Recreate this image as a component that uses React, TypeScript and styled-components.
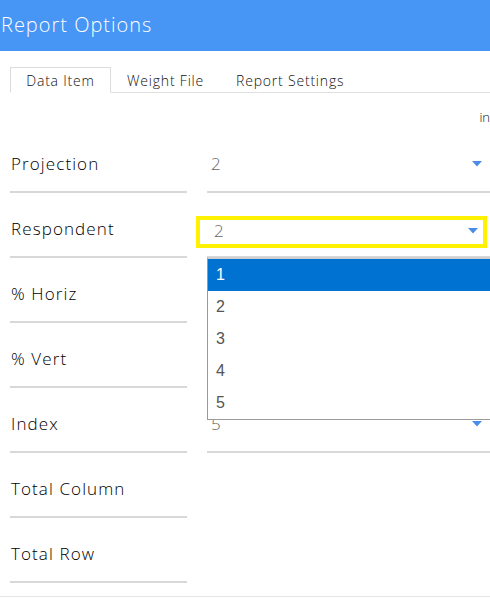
import React from 'react'
import styled, { createGlobalStyle } from 'styled-components'

const Global = createGlobalStyle`
  html, body {
    margin: 0;
    padding: 0;
    background: #fff;
  }
  body {
    font-family: 'Open Sans', 'Noto Sans', sans-serif;
    overflow: hidden;
  }
`

type Field = {
  label: string
  value?: string
  focused?: boolean
}

// % Horiz and % Vert sit under the open list, so they show no select
const fields: Field[] = [
  { label: 'Projection', value: '2' },
  { label: 'Respondent', value: '2', focused: true },
  { label: '% Horiz' },
  { label: '% Vert' },
  { label: 'Index', value: '5' },
  { label: 'Total Column' },
  { label: 'Total Row' },
]

const options = ['1', '2', '3', '4', '5']

function Arrow() {
  return (
    <svg width="10" height="6" viewBox="0 0 10 6">
      <path d="M0 0 L10 0 L5 5.5 Z" fill="#4a8de6" />
    </svg>
  )
}

export default function App() {
  return (
    <Page>
      <Global />
      <Header>Report Options</Header>
      <Tabs>
        <Tab $active>Data Item</Tab>
        <Tab>Weight File</Tab>
        <Tab>Report Settings</Tab>
      </Tabs>
      <Hint>in</Hint>
      <Form>
        {fields.map((f) => (
          <Row key={f.label}>
            <Label>{f.label}</Label>
            {f.value !== undefined && (
              <SelectCell>
                <Select $focused={f.focused}>
                  <Value>{f.value}</Value>
                  <Arrow />
                </Select>
                {f.focused && (
                  <Dropdown>
                    {options.map((o) => (
                      <Option key={o} $selected={o === '1'}>
                        {o}
                      </Option>
                    ))}
                  </Dropdown>
                )}
              </SelectCell>
            )}
          </Row>
        ))}
      </Form>
      <Footer />
    </Page>
  )
}

const Page = styled.div`
  width: 490px;
  height: 600px;
  overflow: hidden;
`

const Header = styled.div`
  height: 51px;
  display: flex;
  align-items: center;
  padding-left: 1px;
  padding-bottom: 2px;
  box-sizing: border-box;
  background-color: #4795f5;
  color: #fff;
  font-size: 20px;
  font-weight: 300;
  letter-spacing: 1px;
`

const Tabs = styled.div`
  display: flex;
  margin: 16px 0 0 10px;
  border-bottom: 1px solid #e0e0e0;
`

const Tab = styled.div<{ $active?: boolean }>`
  height: 26px;
  box-sizing: border-box;
  padding: 0 15px;
  display: flex;
  align-items: center;
  justify-content: center;
  font-size: 14px;
  font-weight: 300;
  color: #111;
  letter-spacing: 0.8px;
  margin-bottom: -1px;
  border: 1px solid ${(p) => (p.$active ? '#dcdcdc' : 'transparent')};
  border-bottom-color: ${(p) => (p.$active ? '#fff' : 'transparent')};
  background: ${(p) => (p.$active ? '#fff' : 'transparent')};
  min-width: ${(p) => (p.$active ? '101px' : 'auto')};
`

const Hint = styled.div`
  display: flex;
  justify-content: flex-end;
  align-items: center;
  height: 35px;
  padding-top: 12px;
  box-sizing: border-box;
  font-size: 13px;
  font-weight: 300;
  color: #111;
`

const Form = styled.div`
  display: flex;
  flex-direction: column;
`

const Row = styled.div`
  height: 65px;
  display: grid;
  grid-template-columns: 177px 1fr;
  column-gap: 20px;
  padding-left: 10px;
`

const Label = styled.div`
  align-self: end;
  padding: 0 0 16px 1px;
  line-height: 22px;
  border-bottom: 2px solid #d8d8d8;
  font-size: 17px;
  font-weight: 350;
  color: #000;
  letter-spacing: 1.1px;
  white-space: nowrap;
`

const SelectCell = styled.div`
  position: relative;
  align-self: end;
  display: flex;
  align-items: flex-end;
  height: 54px;
  box-sizing: border-box;
  padding-bottom: 16px;
  border-bottom: 2px solid #d8d8d8;
`

const Select = styled.div<{ $focused?: boolean }>`
  display: flex;
  align-items: center;
  justify-content: space-between;
  box-sizing: border-box;
  height: ${(p) => (p.$focused ? '32px' : '22px')};
  margin-bottom: ${(p) => (p.$focused ? '-8px' : '0')};
  margin-left: ${(p) => (p.$focused ? '-11px' : '0')};
  width: ${(p) => (p.$focused ? '291px' : '283px')};
  padding: ${(p) => (p.$focused ? '0 5px 2px 14px' : '0 8px 0 4px')};
  border: ${(p) => (p.$focused ? '4px solid #fff200' : '0')};
  color: #666;
  font-size: 17px;
  font-weight: 300;
`

const Value = styled.span`
  line-height: 22px;
`

const Dropdown = styled.div`
  position: absolute;
  top: calc(100% + 1px);
  left: 0;
  width: 320px;
  background: #fff;
  border: 1px solid #9a9a9a;
  border-top: 2px solid #cfcfcf;
  z-index: 2;
  font-family: 'Liberation Sans', Arial, sans-serif;
`

const Option = styled.div<{ $selected?: boolean }>`
  height: 32px;
  display: flex;
  align-items: center;
  padding-left: 8px;
  font-size: 16px;
  color: ${(p) => (p.$selected ? '#fff' : '#555')};
  background: ${(p) => (p.$selected ? '#0073d2' : '#fff')};
`

const Footer = styled.div`
  margin-top: 13px;
  border-top: 1px solid #e6e6e6;
`
